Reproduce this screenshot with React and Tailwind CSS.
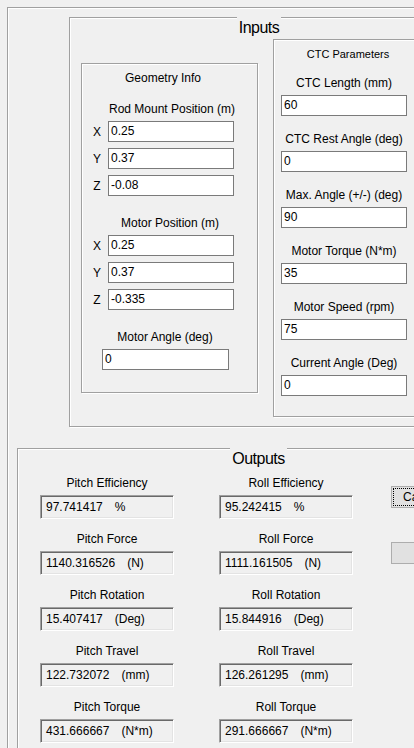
const etched = 'border border-[#a0a0a0] shadow-[inset_1px_1px_0_#fff,1px_1px_0_#fff]';

function TextBox({ value, className = '' }) {
  return (
    <div className={`h-[21px] w-[126px] border border-[#7a7a7a] bg-white pl-[2px] leading-[19px] whitespace-nowrap ${className}`}>
      {value}
    </div>
  );
}

function AxisRow({ axis, value, first }) {
  return (
    <div className={`flex items-center ${first ? '' : 'mt-[6px]'}`}>
      <div className="ml-[9px] w-[12px] text-center">{axis}</div>
      <TextBox value={value} className="ml-[5px]" />
    </div>
  );
}

function CtcField({ label, value, first }) {
  return (
    <div className={first ? 'mt-[13px]' : 'mt-[15px]'}>
      <div className="leading-[16px] text-center whitespace-nowrap">{label}</div>
      <TextBox value={value} className="mt-[4px]" />
    </div>
  );
}

function OutField({ label, value, unit, first }) {
  return (
    <div className={first ? '' : 'mt-[12px]'}>
      <div className="leading-[16px] text-center whitespace-nowrap">{label}</div>
      <div className="mt-[4px] h-[24px] w-[134px] border border-t-[#a0a0a0] border-l-[#a0a0a0] border-r-white border-b-white shadow-[inset_1px_1px_0_#696969,inset_-1px_-1px_0_#e3e3e3] flex gap-[12px] pl-[5px] pt-[1px] leading-[21px] whitespace-nowrap">
        <span>{value}</span>
        <span>{unit}</span>
      </div>
    </div>
  );
}

const ctc = [
  ['CTC Length (mm)', '60'],
  ['CTC Rest Angle (deg)', '0'],
  ['Max. Angle (+/-) (deg)', '90'],
  ['Motor Torque (N*m)', '35'],
  ['Motor Speed (rpm)', '75'],
  ['Current Angle (Deg)', '0'],
];

const pitch = [
  ['Pitch Efficiency', '97.741417', '%'],
  ['Pitch Force', '1140.316526', '(N)'],
  ['Pitch Rotation', '15.407417', '(Deg)'],
  ['Pitch Travel', '122.732072', '(mm)'],
  ['Pitch Torque', '431.666667', '(N*m)'],
];

const roll = [
  ['Roll Efficiency', '95.242415', '%'],
  ['Roll Force', '1111.161505', '(N)'],
  ['Roll Rotation', '15.844916', '(Deg)'],
  ['Roll Travel', '126.261295', '(mm)'],
  ['Roll Torque', '291.666667', '(N*m)'],
];

export default function App() {
  return (
    <div className="w-[414px] h-[748px] overflow-hidden bg-[#f0f0f0] pt-[7px] pl-[7px] font-['Liberation_Sans',Arial,sans-serif] text-[12px] text-black">
      <div className="w-[600px] h-[900px] border border-[#a0a0a0] shadow-[inset_1px_1px_0_#fff]">
        {/* Inputs */}
        <div className={`ml-[61px] mt-[9px] w-[400px] h-[410px] ${etched}`}>
          <div className="-mt-[1px] ml-[167px] w-[44px] h-[20px] pt-[2px] leading-[18px] text-[16px] tracking-[-0.5px] text-center bg-[#f0f0f0]">
            Inputs
          </div>
          <div className="flex items-start">
            {/* Geometry Info */}
            <div className={`ml-[11px] mt-[26px] w-[177px] h-[330px] ${etched}`}>
              <div className="mt-[6px] ml-[1px] w-[160px] leading-[16px] text-center">Geometry Info</div>
              <div className="mt-[15px] ml-[10px] w-[160px] leading-[16px] text-center whitespace-nowrap">Rod Mount Position (m)</div>
              <div className="mt-[4px]">
                <AxisRow axis="X" value="0.25" first />
                <AxisRow axis="Y" value="0.37" />
                <AxisRow axis="Z" value="-0.08" />
              </div>
              <div className="mt-[19px] ml-[8px] w-[160px] leading-[16px] text-center whitespace-nowrap">Motor Position (m)</div>
              <div className="mt-[4px]">
                <AxisRow axis="X" value="0.25" first />
                <AxisRow axis="Y" value="0.37" />
                <AxisRow axis="Z" value="-0.335" />
              </div>
              <div className="mt-[19px] ml-[3px] w-[160px] leading-[16px] text-center whitespace-nowrap">Motor Angle (deg)</div>
              <TextBox value="0" className="mt-[4px] ml-[20px] w-[127px]" />
            </div>

            {/* CTC Parameters */}
            <div className={`ml-[15px] mt-[2px] w-[160px] h-[378px] ${etched}`}>
              <div className="mt-[6px] ml-[7px] w-[126px] pl-[8px] leading-[16px] text-[11px] text-center whitespace-nowrap">CTC Parameters</div>
              <div className="ml-[7px] w-[126px]">
                {ctc.map(([label, value], i) => (
                  <CtcField key={label} label={label} value={value} first={i === 0} />
                ))}
              </div>
            </div>
          </div>
        </div>

        {/* Outputs */}
        <div className={`ml-[9px] mt-[21px] w-[450px] h-[400px] ${etched}`}>
          <div className="-mt-[1px] ml-[212px] w-[57px] h-[22px] pt-[2px] leading-[18px] text-[16px] tracking-[-0.5px] text-center bg-[#f0f0f0]">
            Outputs
          </div>
          <div className="flex items-start">
            <div className="ml-[22px] mt-[5px]">
              {pitch.map(([label, value, unit], i) => (
                <OutField key={label} label={label} value={value} unit={unit} first={i === 0} />
              ))}
            </div>
            <div className="ml-[45px] mt-[5px]">
              {roll.map(([label, value, unit], i) => (
                <OutField key={label} label={label} value={value} unit={unit} first={i === 0} />
              ))}
            </div>
            <div className="ml-[38px] mt-[16px] flex flex-col">
              <button className="w-[75px] h-[22px] border border-[#adadad] bg-[#e1e1e1] p-[1px]">
                <div className="h-full border border-dotted border-black pl-[9px] leading-[16px] text-left">Calculate</div>
              </button>
              <button className="mt-[34px] w-[80px] h-[22px] border border-[#adadad] bg-[#e1e1e1]" />
            </div>
          </div>
        </div>
      </div>
    </div>
  );
}
